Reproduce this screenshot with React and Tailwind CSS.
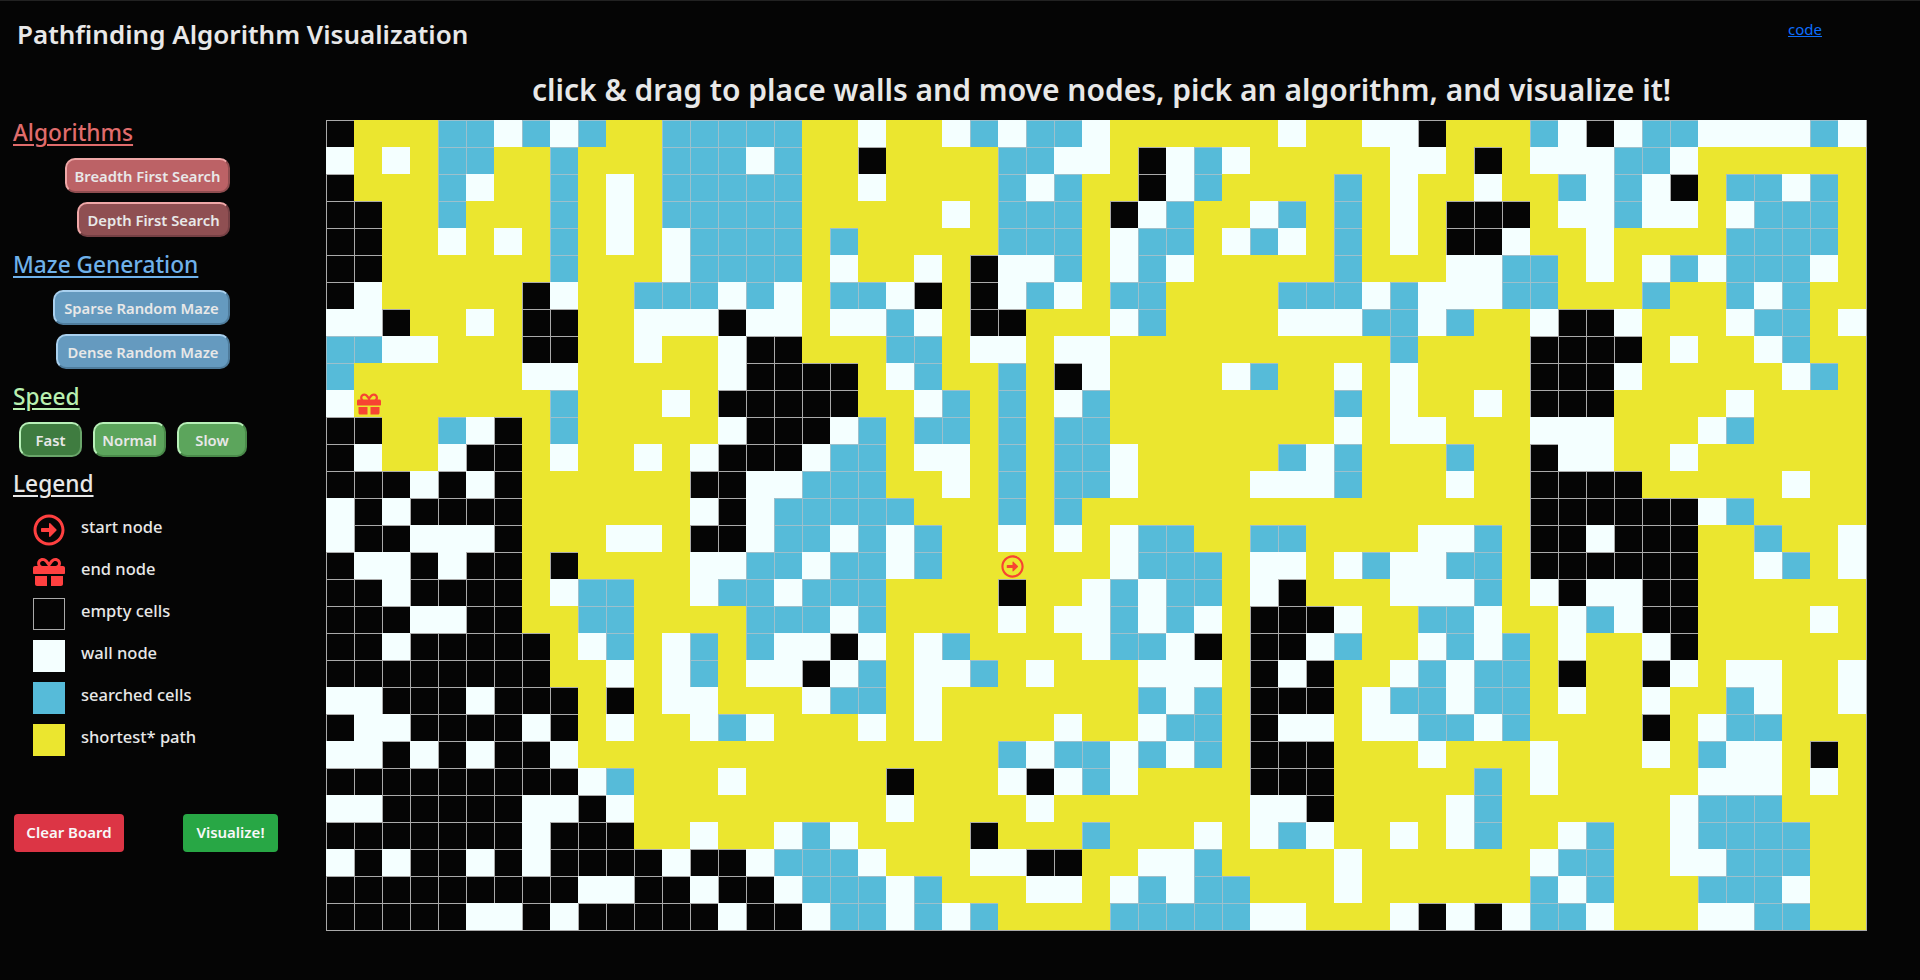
import React from "react";
import { FaGift, FaRegArrowAltCircleRight } from "react-icons/fa";

// k empty, w wall, b searched, y path, S start, E end
const BOARD = [
  "kyyybbwbwbyybbbbbyywyywbwbbwyyyyyywyywwkyyybwkwbbwwwwbw",
  "wywybbyybyyybbbwbyykyyyybbwwykwbwyyyyywwykywwwbbwyyyyyy",
  "kyyybwyybywybbbbbyywyyyybwbyykwbyyyybywyywyybwbwkybbwby",
  "kkyybyyybywybbbbbyyyyywybbbykwbyywbybywykkkywwbwwywbbby",
  "kkyywywybywywbbbbybyyyyybbbywbbywbwybywykkwyywyyyybbbby",
  "kkyyyyyybyyywbbbbywyywykwwbywbwyyyyybyyywwbbywywbwbbbwy",
  "kwyyyyykwyybbbwbwybbwkykwbwybbyyyybbbwbwwwbbyyybyybwbyy",
  "wwkyywykkyywwwkwwywwbwykkyyywbyyyywwwbbwbyywkkwyyywbbyw",
  "bbwwyyykkyywyywkkyyybbywwywwyyyyyyyyyybyyyykkkkywyywbyy",
  "byyyyyywwyyyyywkkkkywbyybykwyyyywbyywywyyyykkkwyyyyywby",
  "wEyyyyyybyyywykkkkkyywbybywbyyyyyyyybywyywykkkyyyywyyyy",
  "kkyybwkybyyyyywkkkwbybbybybbyyyyyyyywywwyyywwwyyywbyyyy",
  "kwyywkkywyywywkkkwbbywwybybbwyyyyybwbyyybyykwwyywyyyyyy",
  "kkkwkwkyyyyyykkwwbbbyywybybbwyyyywwwbyyywyykkkkyyyyywyy",
  "wkwkkkkyyyyyywkwbbbbbyyybybyyyyyyyyyyyyyyyykkkkkkwbyyyy",
  "wkkwwwkyyywwykkwbbwbwbyywywywbbyybbyyyywwbykkwkkkyybyyw",
  "kwwkwkkykyyyywwbbwbbwbyySyyywbbbywwywbwwbbykkkkkkyywbyw",
  "kkwkkkkywbbyywbbwbbbyyyykyywbwbbywkyyywwwbywkwwkkyyyyyy",
  "kkkwwkkyybbyyyybbbwbyyyywywwbwbwykkkwyybbwyywbwkkyyyywy",
  "kkwkkkkkywbywbybwwkwywbyyyywbbwkykkwbyywbwbywyywkyyyyyy",
  "kkkkkkkkyywywbywwkwbywwbywyyywwwykwkyywbwbbykyykwywwyyw",
  "wwkkkwkkkykywwyyywbbywyyyyyyybwbykkkywbbwbbywyywyybwyyw",
  "kwwkkkkwkywyywbwyyywywyyyywyywbbykwwywwbbwbyyyykywbbyyy",
  "wwkwkwkkwyyyyyyyyyyyyyyybwbbwbwbykkkyyywyyywyyywybwwyky",
  "kkkkkkkkkwbyyywyyyyykyyywkwbwyyyykkkyyyyybywyyyyywwwywy",
  "wwkkkkkwwkwyyyyyyyyywyyyywyyyyyyywwkyyyywbyyyyyywbbbyyy",
  "kkkkkkkwkkkyywyywbwyyyykyyybyyywywbwyywywbyywbyywbbbbyy",
  "wkwkkwkwkkkkwkkwbbbwyyywwkkyywwbyyyywyyyyyywbbyywwbbbyy",
  "kkkkkkkkkwwkkwkkwbbbwbyyywwywbwbbyyywyyyyyybwbyyybbbwyy",
  "kkkkkwwkwkkkkkwkkwbbwbwbyyyybbbbbwwyyywkwkwbbwyyywwbbyy",
];

const CELL_STYLES = {
  k: "bg-[#050505] border-[#aaaaaa]",
  w: "bg-[#f4ffff] border-[#f4ffff]",
  b: "bg-[#56bbd9] border-[#9cc0cc]",
  y: "bg-[#ebe62f] border-[#ebe62f]",
  S: "bg-[#ebe62f] border-[#ebe62f]",
  E: "bg-[#ebe62f] border-[#ebe62f]",
};

const Section = ({ title, color, children }) => (
  <div className="mb-[13px]">
    <h3 className={`h-8 mb-2 pl-[13px] text-[22.7px] leading-[30px] font-medium underline underline-offset-[3px] decoration-2 ${color}`}>
      {title}
    </h3>
    {children}
  </div>
);

const BevelButton = ({ label, width, tone }) => (
  <button className={`h-[35px] ${width} pt-px rounded-[10px] border-2 text-[14.8px] font-semibold whitespace-nowrap text-[#e8e8e8] ${tone}`}>
    {label}
  </button>
);

const RED = "bg-[#bc6266] border-t-[#f0a8a8] border-l-[#f0a8a8] border-r-[#8f4d50] border-b-[#8f4d50]";
const RED_DARK = "bg-[#8f4f52] border-t-[#f0a8a8] border-l-[#f0a8a8] border-r-[#754044] border-b-[#754044]";
const BLUE = "bg-[#659abf] border-t-[#a9d0ee] border-l-[#a9d0ee] border-r-[#4f7c9c] border-b-[#4f7c9c]";
const GREEN = "bg-[#5ca55c] border-t-[#b8f0b8] border-l-[#b8f0b8] border-r-[#4a8a4a] border-b-[#4a8a4a]";
const GREEN_DARK = "bg-[#3f7c40] border-t-[#b8f0b8] border-l-[#b8f0b8] border-r-[#6aa56a] border-b-[#6aa56a]";

const LEGEND = [
  { label: "start node", icon: <FaRegArrowAltCircleRight className="w-8 h-8 text-[#ff4040]" /> },
  { label: "end node", icon: <FaGift className="w-8 h-8 text-[#ff4040]" /> },
  { label: "empty cells", icon: <div className="w-8 h-8 border border-[#aaaaaa]" /> },
  { label: "wall node", icon: <div className="w-8 h-8 bg-[#f4ffff]" /> },
  { label: "searched cells", icon: <div className="w-8 h-8 bg-[#56bbd9]" /> },
  { label: "shortest* path", icon: <div className="w-8 h-8 bg-[#ebe62f]" /> },
];

function Sidebar() {
  return (
    <aside className="w-[326px] shrink-0 pt-[48px]">
      <Section title="Algorithms" color="text-[#e06c6c]">
        <div className="w-[230px] flex flex-col items-end gap-[9px]">
          <BevelButton label="Breadth First Search" width="w-[165px]" tone={RED} />
          <BevelButton label="Depth First Search" width="w-[153px]" tone={RED_DARK} />
        </div>
      </Section>
      <Section title="Maze Generation" color="text-[#6fb1ea]">
        <div className="w-[230px] flex flex-col items-end gap-[9px]">
          <BevelButton label="Sparse Random Maze" width="w-[177px]" tone={BLUE} />
          <BevelButton label="Dense Random Maze" width="w-[174px]" tone={BLUE} />
        </div>
      </Section>
      <Section title="Speed" color="text-[#b9f0b0]">
        <div className="flex pl-[19px] gap-[11px] -mb-px">
          <BevelButton label="Fast" width="w-[63px]" tone={GREEN_DARK} />
          <BevelButton label="Normal" width="w-[73px]" tone={GREEN} />
          <BevelButton label="Slow" width="w-[70px]" tone={GREEN} />
        </div>
      </Section>
      <h3 className="h-8 pl-[13px] text-[22.7px] leading-[30px] font-medium underline underline-offset-[3px] decoration-2 text-[#e8e8e8]">
        Legend
      </h3>
      <div className="mt-[13px] pl-[33px] flex flex-col gap-[10px]">
        {LEGEND.map((item) => (
          <div className="flex items-center gap-4 h-8" key={item.label}>
            {item.icon}
            <span className="text-[16.5px] font-medium text-[#e8e8e8] -mt-[6px]">{item.label}</span>
          </div>
        ))}
      </div>
      <div className="mt-[58px] pl-[14px] flex gap-[59px]">
        <button className="w-[110px] h-[38px] pb-[2px] rounded bg-[#dc3545] text-[#f8f8f8] text-[15px] font-semibold">Clear Board</button>
        <button className="w-[95px] h-[38px] pb-[2px] rounded bg-[#28a745] text-[#f8f8f8] text-[15px] font-semibold">Visualize!</button>
      </div>
    </aside>
  );
}

function Board() {
  return (
    <div className="grid grid-cols-[repeat(55,28px)] auto-rows-[27px] w-[1541px] border-r border-b border-[#aaaaaa]">
      {BOARD.flatMap((row, r) =>
        row.split("").map((cell, c) => (
          <div className={`box-border border-t border-l flex items-center justify-center ${CELL_STYLES[cell]}`} key={`${r}-${c}`}>
            {cell === "S" && <FaRegArrowAltCircleRight className="w-[23px] h-[23px] text-[#f74432]" />}
            {cell === "E" && <FaGift className="w-6 h-6 text-[#f74432]" />}
          </div>
        ))
      )}
    </div>
  );
}

export default function App() {
  return (
    <div className="h-[980px] overflow-hidden bg-[#050505] border-t border-[#222222] font-['Noto_Sans',sans-serif]">
      <header className="h-[69px] flex items-start">
        <h1 className="pl-[17px] pt-[15px] text-[26px] leading-9 font-semibold text-[#e8e8e8]">
          Pathfinding Algorithm Visualization
        </h1>
        <a href="#code" className="ml-auto mr-[98px] mt-[16px] text-[15px] leading-6 text-[#0d6efd] underline">
          code
        </a>
      </header>
      <div className="flex">
        <Sidebar />
        <main>
          <h2 className="h-[50px] pb-[12px] flex items-center justify-center pl-[10px] text-[30px] font-semibold text-[#e8e8e8]">
            click &amp; drag to place walls and move nodes, pick an algorithm, and visualize it!
          </h2>
          <Board />
        </main>
      </div>
    </div>
  );
}
